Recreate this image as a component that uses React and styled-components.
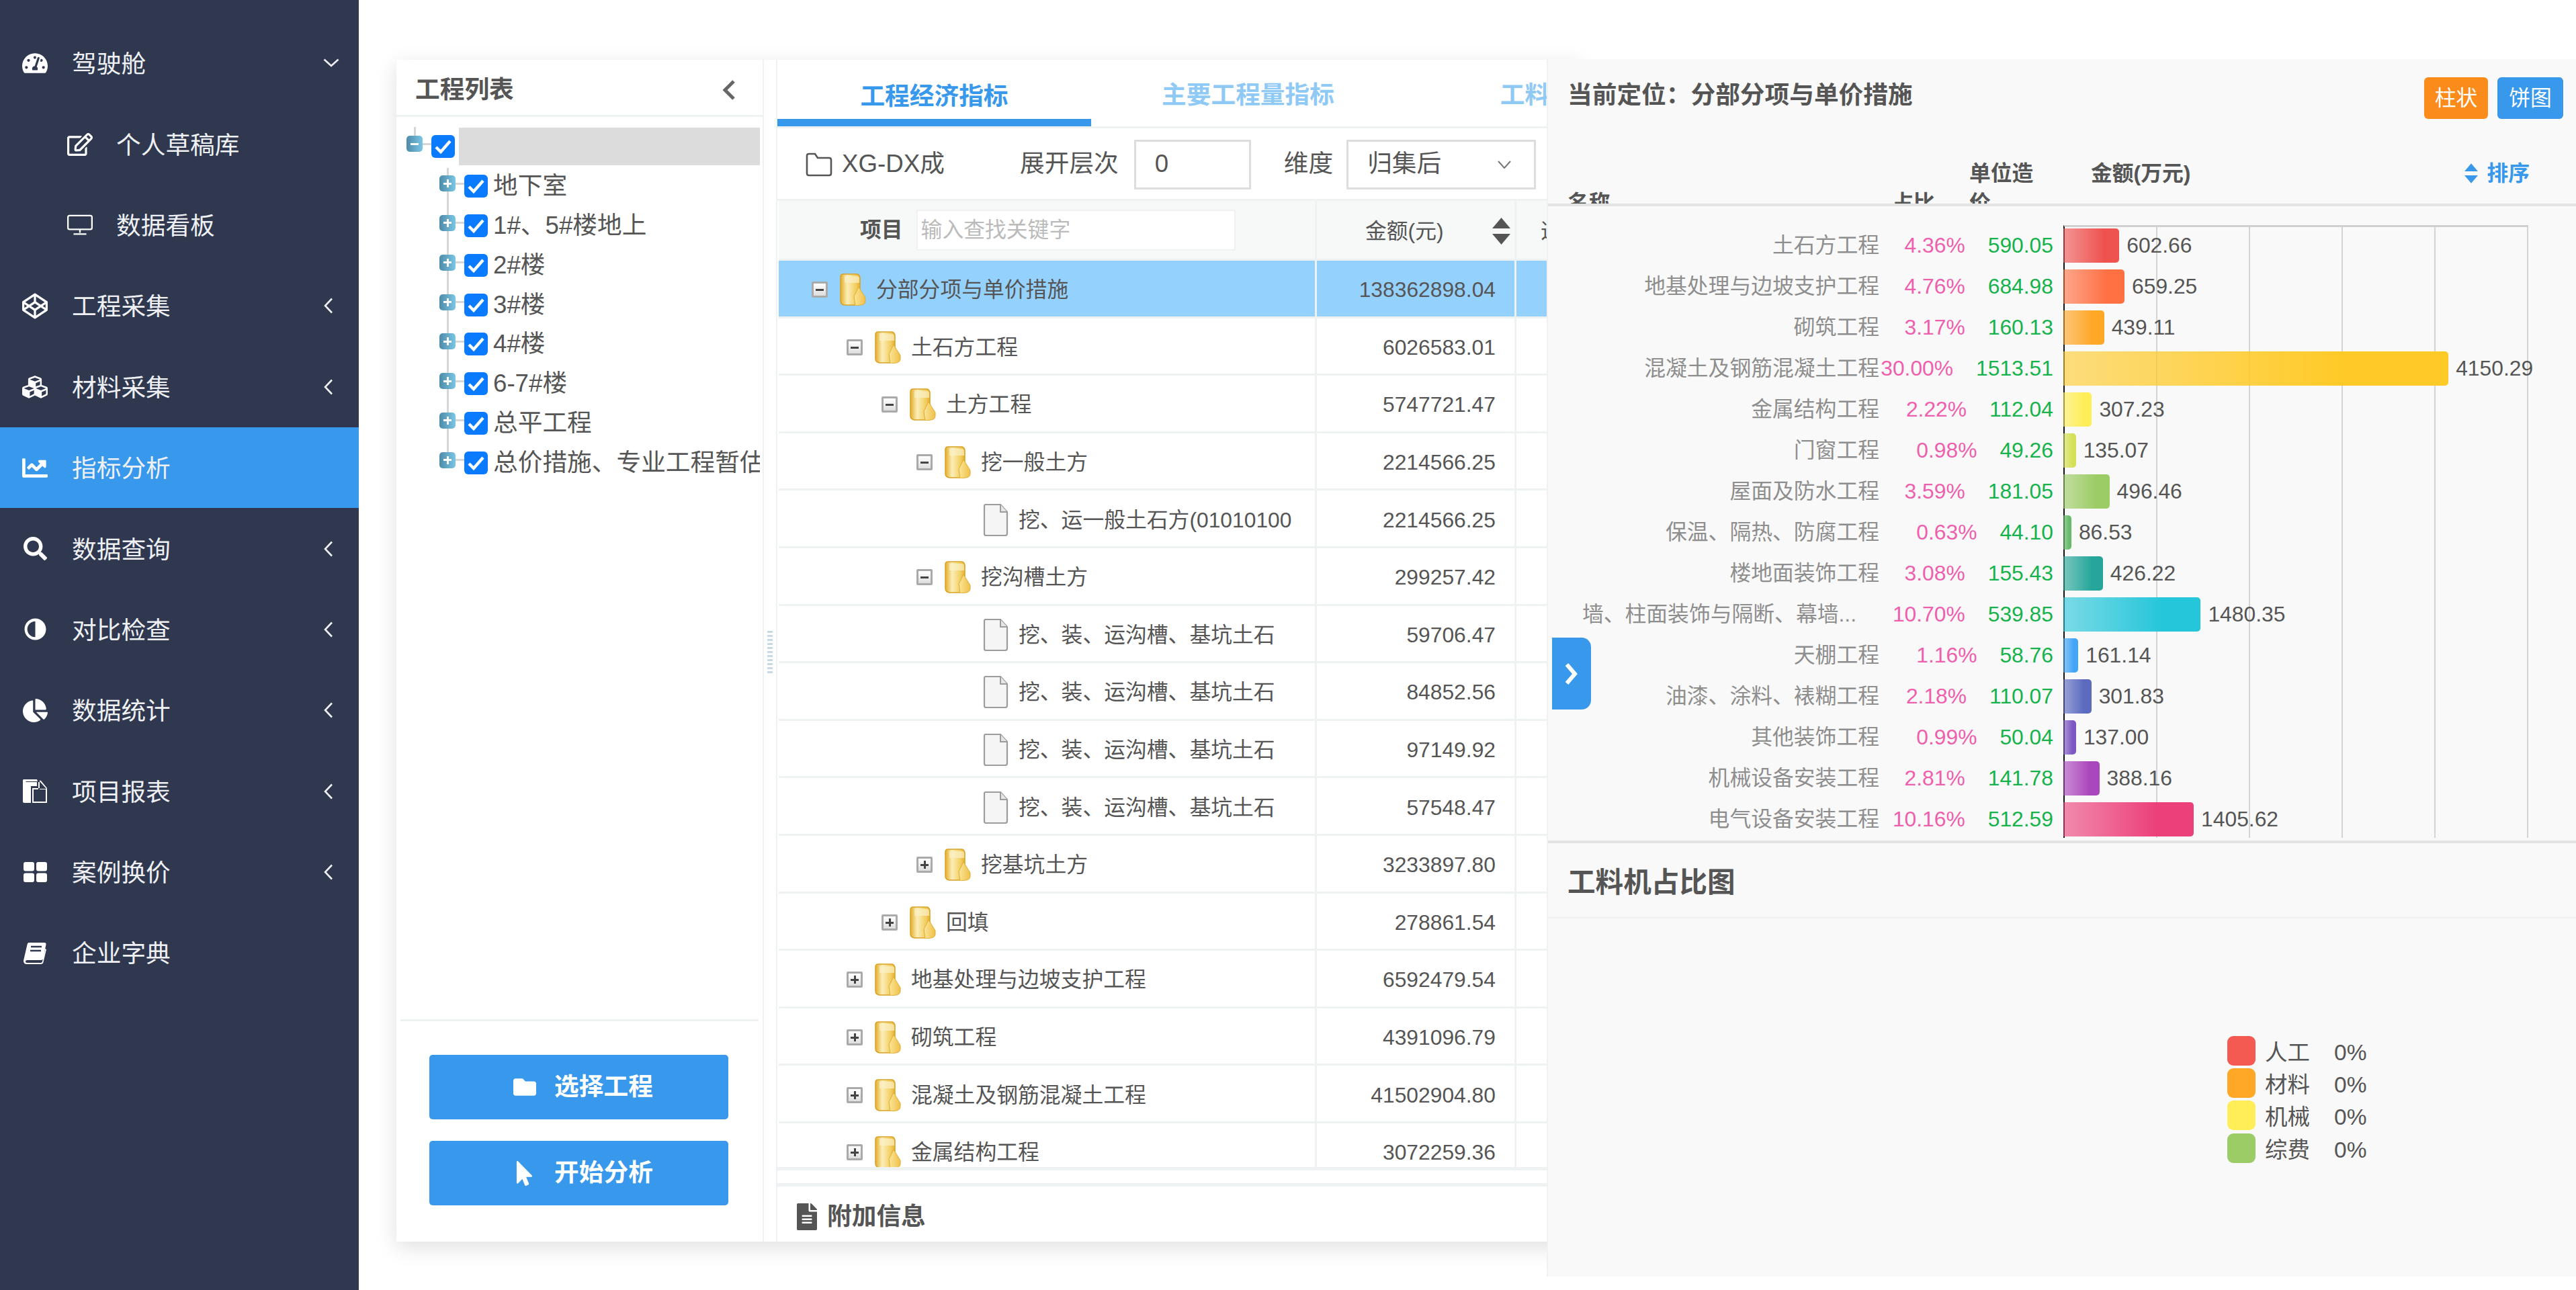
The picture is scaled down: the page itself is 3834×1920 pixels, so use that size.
import React from 'react';
import styled, { createGlobalStyle } from 'styled-components';
import {
  FaTachometerAlt, FaRegEdit, FaCodepen, FaCubes, FaChartLine, FaSearch, FaAdjust,
  FaChartPie, FaFolder, FaMousePointer, FaFileAlt,
} from 'react-icons/fa';

const BLUE = '#3898ec';
const TEXT = '#555555';
const LINE = '#eff2f2';

const Global = createGlobalStyle`
  html, body { margin: 0; padding: 0; background: #fff; overflow: hidden; }
  body { font-family: "Liberation Sans", "Noto Sans CJK SC", sans-serif; color: ${TEXT}; line-height: 1.2; }
  * { box-sizing: border-box; }
`;

const Page = styled.div`
  position: relative;
  display: flex;
  width: 3834px;
  height: 1920px;
  overflow: hidden;
`;

/* ---------- sidebar ---------- */
const Sidebar = styled.nav`
  width: 534px;
  flex: none;
  height: 100%;
  padding-top: 34px;
  background: #2f384f;
`;
const NavRow = styled.div`
  display: flex;
  align-items: center;
  height: 120.4px;
  padding-left: ${p => (p.$sub ? 100 : 33)}px;
  padding-right: ${p => (p.$open ? 29 : 39)}px;
  background: ${p => (p.$active ? BLUE : 'transparent')};
  color: #eef0f3;
  font-size: 36.7px;
`;
const NavIcon = styled.span`
  display: flex;
  align-items: center;
  justify-content: center;
  width: 38px;
  flex: none;
  color: #fff;
`;
const NavLabel = styled.span`
  margin-left: ${p => (p.$sub ? 35 : 36)}px;
  margin-top: 4px;
`;
const NavCaret = styled.svg`
  margin-left: auto;
  fill: none;
  stroke: #eef0f3;
  stroke-width: 2.6;
`;
const Mirrored = styled(FaAdjust)`
  transform: scaleX(-1);
`;

const Monitor = () => (
  <svg width="40" height="32" viewBox="0 0 40 32" fill="none" stroke="#fff" strokeWidth="2.4">
    <rect x="1.2" y="1.2" width="37.6" height="21.6" rx="2.5" />
    <path d="M20 23v5M10 30h20" />
  </svg>
);
const CopyFiles = () => (
  <svg width="38" height="38" viewBox="0 0 38 38" fill="#fff">
    <path d="M2 1h20l1 3H5.500v1H22v6h-9v25H3a2 2 0 0 1-2-2V3a2 2 0 0 1 1-2z" />
    <path d="M15 14h11V2.500L28 3l9 11v22H15zM17 34h18V16H26V5h-2v11h-7z" fillRule="evenodd" />
    <path d="M26 4l10 11h-10z" fill="#2f384f" />
  </svg>
);
const Blocks = () => (
  <svg width="35" height="30" viewBox="0 0 35 30" fill="#fff">
    <rect x="0" y="0" width="16" height="13.500" rx="3" />
    <rect x="19" y="0" width="16" height="13.500" rx="3" />
    <rect x="0" y="16.500" width="16" height="13.500" rx="3" />
    <rect x="19" y="16.500" width="16" height="13.500" rx="3" />
  </svg>
);
const TiltedBook = () => (
  <svg width="36" height="33" viewBox="0 0 36 33">
    <path d="M9 1h23q3 0 2.500 3L30 25q-.5 2-3 2H7q-3 0-3 2t3 2h20q1.500 0 2-2l4.500-19 1.500 1-4.500 19q-.5 3-4 3H6q-5 0-5-5 0-1 .5-2.500L6.500 4q.5-3 2.500-3z" fill="#fff" />
    <path d="M12 7h16M11 13h16" stroke="#2f384f" strokeWidth="2.4" />
  </svg>
);

const NAV = [
  { label: '驾驶舱', icon: <FaTachometerAlt size={38} />, open: true },
  { label: '个人草稿库', icon: <FaRegEdit size={38} />, sub: true },
  { label: '数据看板', icon: <Monitor />, sub: true },
  { label: '工程采集', icon: <FaCodepen size={39} />, caret: true },
  { label: '材料采集', icon: <FaCubes size={46} />, caret: true },
  { label: '指标分析', icon: <FaChartLine size={43} />, active: true },
  { label: '数据查询', icon: <FaSearch size={35} />, caret: true },
  { label: '对比检查', icon: <Mirrored size={33} />, caret: true },
  { label: '数据统计', icon: <FaChartPie size={37} />, caret: true },
  { label: '项目报表', icon: <CopyFiles />, caret: true },
  { label: '案例换价', icon: <Blocks />, caret: true },
  { label: '企业字典', icon: <TiltedBook /> },
];

/* ---------- main card ---------- */
const Main = styled.main`
  flex: 1;
  min-width: 0;
  padding: 89px 0 0 56px;
`;
const Card = styled.div`
  display: flex;
  width: 1760px;
  height: 1759px;
  background: #fff;
  box-shadow: 0 8px 30px rgba(0, 0, 0, 0.13);
`;

/* left tree panel */
const TreePanel = styled.aside`
  display: flex;
  flex-direction: column;
  width: 545px;
  flex: none;
`;
const TreeHeader = styled.header`
  display: flex;
  align-items: center;
  justify-content: space-between;
  height: 85px;
  padding: 8px 40px 0 28px;
  border-bottom: 3px solid ${LINE};
  font-size: 36.7px;
  font-weight: 700;
`;
const TreeBody = styled.div`
  flex: 1;
  padding: 15px 4px 0 15px;
  overflow: hidden;
`;
const TreeRow = styled.div`
  position: relative;
  display: flex;
  align-items: center;
  height: 58.8px;
  padding-left: ${p => (p.$root ? 0 : 49)}px;
  font-size: 36.7px;
  white-space: nowrap;
`;
const TreeToggle = styled.span`
  position: relative;
  flex: none;
  display: flex;
  align-items: center;
  justify-content: center;
  width: 24px;
  height: 24px;
  margin-top: -8px;
  border-radius: 5px;
  background: linear-gradient(90deg, #4d8ba8, #7cc6e6);
  color: #fff;
  font-size: 0;
  z-index: 1;
  &::before {
    content: '';
    position: absolute;
    width: 12px;
    height: 3px;
    background: #fff;
  }
  &::after {
    content: '';
    position: absolute;
    width: 3px;
    height: 12px;
    background: #fff;
    display: ${p => (p.$plus ? 'block' : 'none')};
  }
`;
const Connector = styled.span`
  flex: none;
  width: ${p => p.$w}px;
  height: 3px;
  margin-top: -8px;
  background: #d6d6d6;
`;
const Checkbox = styled.span`
  flex: none;
  display: flex;
  align-items: center;
  justify-content: center;
  width: 35px;
  height: 34px;
  border-radius: 6px;
  background: #0a7aff;
`;
const RootBar = styled.span`
  flex: 1;
  height: 56px;
  margin-left: 6px;
  background: #dcdcdc;
`;
const RootStem = styled.span`
  position: absolute;
  left: 11px;
  top: 0;
  width: 3px;
  height: 14px;
  background: #d6d6d6;
`;
const TreeChildren = styled.div`
  position: relative;
  &::before {
    content: '';
    position: absolute;
    left: 60px;
    top: 2px;
    bottom: 30px;
    width: 3px;
    background: #d6d6d6;
  }
`;
const TreeName = styled.span`
  margin-left: 8px;
  overflow: hidden;
`;
const TreeFoot = styled.div`
  display: flex;
  flex-direction: column;
  gap: 32px;
  margin: 0 6px;
  padding: 50px 0 54px 43px;
  border-top: 3px solid ${LINE};
`;
const ActionButton = styled.button`
  display: flex;
  align-items: center;
  justify-content: center;
  gap: 27px;
  width: 445px;
  height: 96px;
  padding: 0 0 0 12px;
  border: 0;
  border-radius: 5px;
  background: ${BLUE};
  color: #fff;
  font: 700 36.7px/1.2 "Liberation Sans", "Noto Sans CJK SC", sans-serif;
`;
const ActionIcon = styled.span`
  display: flex;
  align-items: center;
  justify-content: center;
  width: 35px;
`;

const Splitter = styled.div`
  display: flex;
  align-items: center;
  justify-content: center;
  width: 22px;
  flex: none;
  border-left: 2px solid ${LINE};
  border-right: 2px solid ${LINE};
`;
const Grip = styled.span`
  width: 8px;
  height: 66px;
  background: repeating-linear-gradient(0deg, #c9d9e4 0 3px, transparent 3px 6px);
`;

/* centre */
const Centre = styled.section`
  flex: 1;
  min-width: 0;
  display: flex;
  flex-direction: column;
  overflow: hidden;
`;
const Tabs = styled.div`
  display: flex;
  height: 102px;
  flex: none;
  border-bottom: 3px solid ${LINE};
  white-space: nowrap;
`;
const Tab = styled.div`
  display: flex;
  align-items: center;
  justify-content: center;
  width: 467px;
  flex: none;
  height: 99px;
  padding-top: ${p => (p.$active ? 23 : 19)}px;
  border-bottom: 11px solid ${p => (p.$active ? BLUE : 'transparent')};
  color: ${p => (p.$active ? BLUE : '#8fc9f5')};
  font-size: 36.7px;
  font-weight: 700;
`;
const Toolbar = styled.div`
  display: flex;
  align-items: center;
  height: 108px;
  flex: none;
  padding: 2px 0 0 42px;
  font-size: 36.7px;
  border-bottom: 3px solid ${LINE};
  white-space: nowrap;
`;
const ProjectName = styled.span`
  margin-left: 14px;
  width: 265px;
  flex: none;
`;
const NumberBox = styled.div`
  display: flex;
  align-items: center;
  width: 174px;
  height: 74px;
  margin: 0 49px 0 23px;
  padding-left: 28px;
  border: 3px solid #dddddd;
  flex: none;
`;
const SelectBox = styled.div`
  display: flex;
  align-items: center;
  justify-content: space-between;
  width: 282px;
  height: 74px;
  margin-left: 20px;
  padding: 0 34px 0 28px;
  border: 3px solid #dddddd;
  flex: none;
`;
const TableArea = styled.div`
  flex: none;
  height: 1438px;
  overflow: hidden;
  margin-left: 2px;
`;
const Row = styled.div`
  display: grid;
  grid-template-columns: 801px 297px 1fr;
  height: ${p => (p.$head ? 89 : 85.6)}px;
  background: ${p => (p.$head ? '#f7f8f8' : p.$selected ? '#95d1fd' : '#fff')};
  border-bottom: 3px solid ${LINE};
  font-size: 31.8px;
`;
const Cell = styled.div`
  display: flex;
  align-items: center;
  min-width: 0;
  overflow: hidden;
  white-space: nowrap;
  padding-top: 4px;
  border-right: ${p => (p.$last ? 0 : `3px solid ${LINE}`)};
`;
const AmountCell = styled(Cell)`
  justify-content: flex-end;
  padding-right: 28px;
`;
const HeadProject = styled(Cell)`
  padding-left: 121px;
  padding-top: 0;
  font-weight: 700;
`;
const SearchBox = styled.div`
  width: 475px;
  height: 61px;
  margin-left: 20px;
  padding: 0 5px;
  display: flex;
  align-items: center;
  background: #fff;
  border: 2px solid #f0f1f1;
  color: #bbbbbb;
  font-weight: 400;
`;
const HeadAmount = styled(Cell)`
  padding-left: 72px;
`;
const Sorter = styled.svg`
  flex: none;
  margin-left: ${p => p.$gap}px;
`;
const HeadRest = styled(Cell)`
  padding-left: 36px;
`;
const NodeCell = styled(Cell)`
  padding-left: ${p => 49 + p.$level * 52}px;
`;
const Expander = styled.span`
  position: relative;
  flex: none;
  width: 24px;
  height: 24px;
  border: 3px solid #aaaaaa;
  border-radius: 2px;
  background: linear-gradient(#ffffff, #dedede);
  visibility: ${p => (p.$hidden ? 'hidden' : 'visible')};
  &::before {
    content: '';
    position: absolute;
    left: 3px;
    right: 3px;
    top: 8px;
    height: 3px;
    background: #444;
  }
  &::after {
    content: '';
    position: absolute;
    top: 3px;
    bottom: 3px;
    left: 8px;
    width: 3px;
    background: #444;
    display: ${p => (p.$plus ? 'block' : 'none')};
  }
`;
const LeafSpacer = styled.span`
  width: 17px;
  flex: none;
`;
const NodeLabel = styled.span`
  margin-left: ${p => (p.$leaf ? 15 : 14)}px;
`;
const Footer = styled.footer`
  margin-top: 19px;
  flex: 1;
  display: flex;
  align-items: center;
  gap: 10px;
  padding: 8px 0 0 24px;
  border-top: 5px solid ${LINE};
  font-size: 36.7px;
  font-weight: 700;
`;
const TableEnd = styled.div`
  height: 5px;
  flex: none;
  background: ${LINE};
`;

const Folder = () => (
  <svg width="41" height="48" viewBox="0 0 41 48" style={{ flex: 'none', marginLeft: 17 }}>
    <defs>
      <linearGradient id="fa" x1="0" x2="1" y1="0" y2="0">
        <stop offset="0" stopColor="#e4ad2a" />
        <stop offset="0.35" stopColor="#fbeeb8" />
        <stop offset="0.8" stopColor="#f2cd5e" />
        <stop offset="1" stopColor="#e3ae30" />
      </linearGradient>
      <linearGradient id="fb" x1="0" x2="1" y1="0" y2="0">
        <stop offset="0" stopColor="#fbe699" />
        <stop offset="1" stopColor="#efc049" />
      </linearGradient>
    </defs>
    <path d="M2 5q0-4 4-4h20q4 0 5 5v36l-6 5H8q-6-1-6-6z" fill="url(#fa)" stroke="#d9a224" strokeWidth="1.5" />
    <path d="M8 4h19q3 0 3 4v6H8z" fill="#fbf1c8" opacity="0.7" />
    <path d="M29 20l10 16v5q0 5-6 6l-9 1-2-14z" fill="url(#fb)" stroke="#e0ac2d" strokeWidth="1" />
  </svg>
);
const Leaf = () => (
  <svg width="39" height="48" viewBox="0 0 39 48" style={{ flex: 'none', marginLeft: 5 }}>
    <path d="M3 3q0-2 2-2h22l10 11v32q0 3-3 3H5q-2 0-2-3z" fill="#f5f5f5" stroke="#9c9c9c" strokeWidth="2.2" />
    <path d="M27 1v11h10" fill="#e6e6e6" stroke="#9c9c9c" strokeWidth="2" />
  </svg>
);
const Tick = () => (
  <svg width="25" height="22" viewBox="0 0 25 22" fill="none" stroke="#fff" strokeWidth="4.400">
    <path d="M2 12l7 7L23 3" />
  </svg>
);
const SortMark = ({ color, w, h, gap }) => (
  <Sorter $gap={gap} width={w} height={h} viewBox="0 0 27 40" fill={color}>
    <path d="M13.500 0L27 16H0zM13.500 40L27 24H0z" />
  </Sorter>
);

const ROWS = [
  [0, '分部分项与单价措施', '138362898.04', 'open'],
  [1, '土石方工程', '6026583.01', 'open'],
  [2, '土方工程', '5747721.47', 'open'],
  [3, '挖一般土方', '2214566.25', 'open'],
  [4, '挖、运一般土石方(01010100', '2214566.25', 'leaf'],
  [3, '挖沟槽土方', '299257.42', 'open'],
  [4, '挖、装、运沟槽、基坑土石', '59706.47', 'leaf'],
  [4, '挖、装、运沟槽、基坑土石', '84852.56', 'leaf'],
  [4, '挖、装、运沟槽、基坑土石', '97149.92', 'leaf'],
  [4, '挖、装、运沟槽、基坑土石', '57548.47', 'leaf'],
  [3, '挖基坑土方', '3233897.80', 'closed'],
  [2, '回填', '278861.54', 'closed'],
  [1, '地基处理与边坡支护工程', '6592479.54', 'closed'],
  [1, '砌筑工程', '4391096.79', 'closed'],
  [1, '混凝土及钢筋混凝土工程', '41502904.80', 'closed'],
  [1, '金属结构工程', '3072259.36', 'closed'],
];

const TREE = ['地下室', '1#、5#楼地上', '2#楼', '3#楼', '4#楼', '6-7#楼', '总平工程', '总价措施、专业工程暂估'];

/* ---------- right overlay ---------- */
const Overlay = styled.section`
  position: absolute;
  left: 2302px;
  top: 88px;
  width: 1532px;
  height: 1812px;
  display: flex;
  flex-direction: column;
  background: #f9f9f9;
  border-left: 2px solid #f1f1f1;
`;
const OverlayHead = styled.header`
  display: flex;
  align-items: flex-start;
  justify-content: space-between;
  height: 102px;
  flex: none;
  padding: 27px 19px 0 29px;
`;
const OverlayTitle = styled.h2`
  margin: 5px 0 0;
  font-size: 36.7px;
  line-height: 44px;
  font-weight: 700;
  color: ${TEXT};
`;
const ChartSwitch = styled.div`
  display: flex;
  gap: 14px;
`;
const SwitchButton = styled.span`
  display: flex;
  align-items: center;
  justify-content: center;
  width: ${p => p.$w}px;
  height: 62px;
  border-radius: 6px;
  background: ${p => p.$bg};
  color: #fff;
  font-size: 31.8px;
`;
const ListHeader = styled.div`
  display: grid;
  grid-template-columns: 483px 115px 181px 1fr auto;
  align-items: start;
  height: 117px;
  flex: none;
  padding: 46px 69px 0 29px;
  overflow: hidden;
  border-bottom: 4px solid #e2e4e4;
  font-size: 31.8px;
  line-height: 44px;
  font-weight: 700;
`;
const SecondLine = styled.span`
  margin-top: 44px;
`;
const WrapHead = styled.span`
  display: block;
  width: 98px;
`;
const SortLabel = styled.span`
  display: flex;
  align-items: center;
  gap: 13px;
  color: ${BLUE};
`;
const Chart = styled.div`
  position: relative;
  margin-top: 28px;
  flex: none;
  height: 920px;
  border-bottom: 4px solid #e2e4e4;
`;
const GridLayer = styled.div`
  position: absolute;
  left: 767px;
  top: 0;
  bottom: 4px;
  width: 692px;
  border-left: 2px solid #111;
  border-top: 3px solid #d0d0d0;
  background: repeating-linear-gradient(90deg, transparent 0 136px, #d4d4d4 136px 138px);
`;
const ChartRow = styled.div`
  position: relative;
  display: grid;
  grid-template-columns: 493px 259px 15px 1fr;
  align-items: center;
  height: 61px;
  font-size: 31.8px;
  white-space: nowrap;
`;
const SeriesName = styled.span`
  justify-self: end;
  color: #8e8e8e;
  margin-right: ${p => (p.$cut ? 34 : 0)}px;
`;
const Metrics = styled.span`
  display: flex;
  justify-content: flex-end;
  gap: 34px;
`;
const Pct = styled.span`
  color: #ee5fae;
`;
const Unit = styled.span`
  color: #16b24c;
`;
const BarTrack = styled.span`
  grid-column: 4;
  display: flex;
  align-items: center;
`;
const Bar = styled.span`
  height: 51px;
  flex: none;
  border-radius: 0 5px 5px 0;
  background: linear-gradient(90deg, ${p => p.$color}99, ${p => p.$color} 72%);
`;
const BarValue = styled.span`
  margin-left: 11px;
  color: ${TEXT};
`;
const ShareTitle = styled.h2`
  display: flex;
  align-items: center;
  height: 112px;
  margin: 0;
  flex: none;
  padding: 8px 0 0 29px;
  border-bottom: 3px solid #f1f3f3;
  font-size: 41.6px;
  font-weight: 700;
  color: ${TEXT};
`;
const ShareBody = styled.div`
  flex: 1;
  padding: 175px 0 0 1011px;
`;
const LegendRow = styled.div`
  display: flex;
  align-items: flex-start;
  height: 48.2px;
  font-size: 33.5px;
  line-height: 40px;
`;
const Swatch = styled.span`
  width: 42px;
  height: 44px;
  flex: none;
  border-radius: 9px;
  background: ${p => p.$color};
`;
const LegendName = styled.span`
  margin: 5px 0 0 14px;
  width: ${p => p.$w}px;
`;
const CollapseTab = styled.div`
  position: absolute;
  left: 6px;
  top: 861px;
  display: flex;
  align-items: center;
  justify-content: center;
  width: 58px;
  height: 107px;
  border-radius: 0 14px 14px 0;
  background: ${BLUE};
`;

const SERIES = [
  ['土石方工程', '4.36%', '590.05', 602.66, '#ef5350'],
  ['地基处理与边坡支护工程', '4.76%', '684.98', 659.25, '#ff7043'],
  ['砌筑工程', '3.17%', '160.13', 439.11, '#ffa726'],
  ['混凝土及钢筋混凝土工程', '30.00%', '1513.51', 4150.29, '#ffca28'],
  ['金属结构工程', '2.22%', '112.04', 307.23, '#ffee58'],
  ['门窗工程', '0.98%', '49.26', 135.07, '#d4e157'],
  ['屋面及防水工程', '3.59%', '181.05', 496.46, '#9ccc65'],
  ['保温、隔热、防腐工程', '0.63%', '44.10', 86.53, '#66bb6a'],
  ['楼地面装饰工程', '3.08%', '155.43', 426.22, '#26a69a'],
  ['墙、柱面装饰与隔断、幕墙...', '10.70%', '539.85', 1480.35, '#26c6da', true],
  ['天棚工程', '1.16%', '58.76', 161.14, '#42a5f5'],
  ['油漆、涂料、裱糊工程', '2.18%', '110.07', 301.83, '#5c6bc0'],
  ['其他装饰工程', '0.99%', '50.04', 137.00, '#7e57c2'],
  ['机械设备安装工程', '2.81%', '141.78', 388.16, '#ab47bc'],
  ['电气设备安装工程', '10.16%', '512.59', 1405.62, '#ec407a'],
];
const LEGEND = [['人工', '#f55a52'], ['材料', '#ffa726'], ['机械', '#ffee58'], ['综费', '#9ccc65']];

export default function App() {
  return (
    <Page>
      <Global />
      <Sidebar>
        {NAV.map(n => (
          <NavRow key={n.label} $sub={n.sub} $active={n.active} $open={n.open}>
            <NavIcon>{n.icon}</NavIcon>
            <NavLabel $sub={n.sub}>{n.label}</NavLabel>
            {n.open && (
              <NavCaret width="24" height="14" viewBox="0 0 24 14"><path d="M1.500 1.500L12 11 22.500 1.500" /></NavCaret>
            )}
            {n.caret && (
              <NavCaret width="13" height="24" viewBox="0 0 13 24"><path d="M12 1.500L2 12l10 10.500" /></NavCaret>
            )}
          </NavRow>
        ))}
      </Sidebar>

      <Main>
        <Card>
          <TreePanel>
            <TreeHeader>
              工程列表
              <svg width="20" height="30" viewBox="0 0 20 30" fill="none" stroke="#666" strokeWidth="5"><path d="M17 2L4 15l13 13" /></svg>
            </TreeHeader>
            <TreeBody>
              <TreeRow $root>
                <RootStem />
                <TreeToggle />
                <Connector $w={13} />
                <Checkbox><Tick /></Checkbox>
                <RootBar />
              </TreeRow>
              <TreeChildren>
                {TREE.map(t => (
                  <TreeRow key={t}>
                    <TreeToggle $plus />
                    <Connector $w={13} />
                    <Checkbox><Tick /></Checkbox>
                    <TreeName>{t}</TreeName>
                  </TreeRow>
                ))}
              </TreeChildren>
            </TreeBody>
            <TreeFoot>
              <ActionButton><ActionIcon><FaFolder size={34} /></ActionIcon>选择工程</ActionButton>
              <ActionButton><ActionIcon><FaMousePointer size={37} /></ActionIcon>开始分析</ActionButton>
            </TreeFoot>
          </TreePanel>

          <Splitter><Grip /></Splitter>

          <Centre>
            <Tabs>
              <Tab $active>工程经济指标</Tab>
              <Tab>主要工程量指标</Tab>
              <Tab>工料机指标</Tab>
            </Tabs>
            <Toolbar>
              <svg width="40" height="36" viewBox="0 0 40 36" fill="none" stroke="#555" strokeWidth="2.6" style={{ flex: 'none' }}>
                <path d="M2 5q0-3 3-3h9l4 6h17q3 0 3 3v20q0 3-3 3H5q-3 0-3-3z" />
              </svg>
              <ProjectName>XG-DX成</ProjectName>
              展开层次
              <NumberBox>0</NumberBox>
              维度
              <SelectBox>
                归集后
                <svg width="20" height="12" viewBox="0 0 20 12" fill="none" stroke="#777" strokeWidth="2"><path d="M1 1l9 10 9-10" /></svg>
              </SelectBox>
            </Toolbar>
            <TableArea>
              <Row $head>
                <HeadProject>项目<SearchBox>输入查找关键字</SearchBox></HeadProject>
                <HeadAmount>金额(元)<SortMark color="#555" w={27} h={40} gap={72} /></HeadAmount>
                <HeadRest $last>造价(元)</HeadRest>
              </Row>
              {ROWS.map(([level, name, amount, kind], i) => (
                <Row key={i} $selected={i === 0}>
                  <NodeCell $level={level}>
                    <Expander $plus={kind === 'closed'} $hidden={kind === 'leaf'} />
                    {kind === 'leaf' ? <><LeafSpacer /><Leaf /></> : <Folder />}
                    <NodeLabel $leaf={kind === 'leaf'}>{name}</NodeLabel>
                  </NodeCell>
                  <AmountCell>{amount}</AmountCell>
                  <Cell $last />
                </Row>
              ))}
            </TableArea>
            <TableEnd />
            <Footer>
              <FaFileAlt size={40} />
              附加信息
            </Footer>
          </Centre>
        </Card>
      </Main>

      <Overlay>
        <OverlayHead>
          <OverlayTitle>当前定位：分部分项与单价措施</OverlayTitle>
          <ChartSwitch>
            <SwitchButton $w={95} $bg="#fb8c1c">柱状</SwitchButton>
            <SwitchButton $w={98} $bg={BLUE}>饼图</SwitchButton>
          </ChartSwitch>
        </OverlayHead>
        <ListHeader>
          <SecondLine>名称</SecondLine>
          <SecondLine>占比</SecondLine>
          <WrapHead>单位造价</WrapHead>
          <span>金额(万元)</span>
          <SortLabel><SortMark color={BLUE} w={20} h={38} gap={0} />排序</SortLabel>
        </ListHeader>
        <Chart>
          <GridLayer />
          {SERIES.map(([name, pct, unit, value, color, cut]) => (
            <ChartRow key={name}>
              <SeriesName $cut={cut}>{name}</SeriesName>
              <Metrics><Pct>{pct}</Pct><Unit>{unit}</Unit></Metrics>
              <BarTrack>
                <Bar $color={color} style={{ width: value * 0.1381 }} />
                <BarValue>{value.toFixed(2)}</BarValue>
              </BarTrack>
            </ChartRow>
          ))}
        </Chart>
        <ShareTitle>工料机占比图</ShareTitle>
        <ShareBody>
          {LEGEND.map(([name, color]) => (
            <LegendRow key={name}>
              <Swatch $color={color} />
              <LegendName $w={89}>{name}</LegendName>
              <LegendName $w={60}>0%</LegendName>
            </LegendRow>
          ))}
        </ShareBody>
        <CollapseTab>
          <svg width="22" height="34" viewBox="0 0 22 34" fill="none" stroke="#fff" strokeWidth="6"><path d="M4 3l12 14L4 31" /></svg>
        </CollapseTab>
      </Overlay>
    </Page>
  );
}
